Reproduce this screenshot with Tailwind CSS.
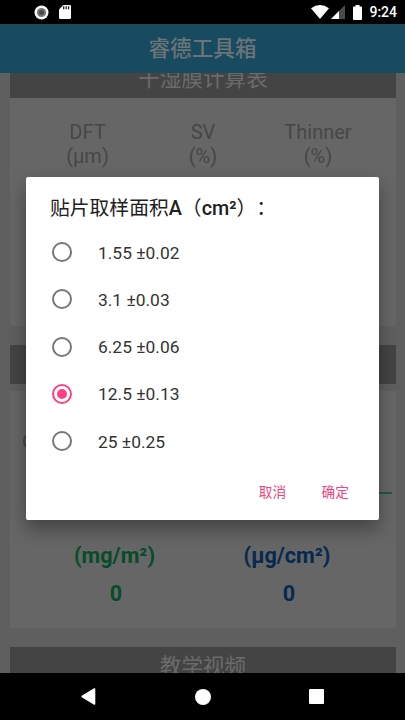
<!DOCTYPE html>
<html lang="zh-CN">
<head>
<meta charset="utf-8">
<meta name="viewport" content="width=device-width, initial-scale=1">
<title>睿德工具箱</title>
<script src="https://cdn.jsdelivr.net/npm/@tailwindcss/browser@4"></script>
</head>
<body class="bg-black">
<div class="relative flex h-[720px] w-[405px] flex-col overflow-hidden bg-black font-[Roboto,'Noto_Sans_CJK_SC',sans-serif]">
  <!-- Status bar -->
  <div class="flex h-6 shrink-0 items-center justify-between pl-[34px] pr-2">
    <div class="flex items-center gap-[10px]">
      <svg class="size-[15px]" viewBox="0 0 15 15"><circle cx="7.5" cy="7.5" r="7" fill="#fff"/><circle cx="7.5" cy="7.5" r="4.6" fill="#777"/><circle cx="7.5" cy="7.5" r="2.5" fill="#4b4b4b"/></svg>
      <svg class="h-[14px] w-3" viewBox="0 0 12 14"><path d="M4.3 0H10.8Q12 0 12 1.2V12.8Q12 14 10.8 14H1.2Q0 14 0 12.8V4.4Z" fill="#fff"/><path d="M4.7 1.3v3M7.2 1.3v3M9.6 1.3v3" stroke="#222" stroke-width="1.3"/></svg>
    </div>
    <div class="flex items-center">
      <svg class="h-[14px] w-[18px]" viewBox="0 0 18 14"><path d="M0 3.2Q9-3 18 3.2L9 14Z" fill="#fff"/></svg>
      <svg class="ml-[2px] h-[14px] w-[14px]" viewBox="0 0 14 14"><path d="M0 14 14 0V14Z" fill="#4a4a4a"/><path d="M0 14 8 6V14Z" fill="#fff"/></svg>
      <svg class="ml-[8px] h-[15px] w-[9px]" viewBox="0 0 9 15"><path d="M2.5 0h4v1.5H8q1 0 1 1V14q0 1-1 1H1q-1 0-1-1V2.5q0-1 1-1h1.5z" fill="#fff"/></svg>
      <span class="ml-[7px] text-[14px] font-medium leading-6 text-white">9:24</span>
    </div>
  </div>
  <!-- App bar -->
  <header class="flex h-[49px] shrink-0 items-center justify-center bg-[#184a60] pt-[2px] text-[21.6px] font-medium text-[#6b7478]">睿德工具箱</header>
  <!-- Dimmed page -->
  <main class="flex h-[600px] shrink-0 flex-col overflow-hidden bg-[#5f5f5f] pl-[10px] pr-[9px]">
    <h2 class="flex h-[25px] shrink-0 items-end justify-center overflow-hidden bg-[#444] pb-[1px] text-[21.6px] leading-[36px] text-[#6b6b6b]"><span>干湿膜计算表</span></h2>
    <section class="grid h-[228px] shrink-0 grid-cols-[155px_76px_1fr] content-start rounded-b-sm bg-[#666] pt-[22px] text-center text-[20px] leading-[24px] text-[#474747]">
      <div>DFT<br>(µm)</div><div>SV<br>(%)</div><div class="pr-[1px]">Thinner<br>(%)</div>
    </section>
    <div class="mt-[19px] h-[39px] shrink-0 bg-[#444]"></div>
    <section class="mt-[7px] h-[237px] shrink-0 bg-[#666]">
      <div class="flex h-[103px] items-end justify-between pl-[13px] pr-[4px]">
        <span class="mb-[43px] size-5 rounded-full border-2 border-[#444]"></span>
        <span class="h-[2px] w-10 bg-[#1d594b]"></span>
      </div>
      <div class="grid grid-cols-[209px_136px] pt-[43px] text-center text-[21.6px] font-bold leading-[38px]">
        <div class="text-[#064c2a]">(mg/m²)<div class="pl-[3px]">0</div></div>
        <div class="text-[#05294f]">(µg/cm²)<div class="pl-[4px]">0</div></div>
      </div>
    </section>
    <h2 class="mt-[19px] h-[39px] shrink-0 bg-[#444] text-center text-[21.6px] leading-[39px] text-[#6b6b6b]">教学视频</h2>
  </main>
  <!-- Navigation bar -->
  <nav class="grid grow grid-cols-[1fr_24px_1fr] items-center justify-items-center bg-black">
    <svg class="ml-[-14px] h-[17px] w-[15px]" viewBox="0 0 15 17"><path d="M13.5 1v15L1.2 8.5Z" fill="#fff" stroke="#fff" stroke-width="1.6" stroke-linejoin="round"/></svg>
    <span class="size-4 rounded-full bg-white"></span>
    <span class="ml-[13px] size-[15px] rounded-[1px] bg-white"></span>
  </nav>
  <!-- Area picker dialog -->
  <div role="dialog" class="absolute left-[26px] top-[176.5px] flex h-[343.5px] w-[353px] flex-col rounded-[2px] bg-white shadow-[0_9px_18px_rgba(0,0,0,0.35)]">
    <h1 class="h-[52px] pl-6 pt-[17px] text-[19.8px] leading-[30px] text-[#212121] [text-spacing-trim:space-all]">贴片取样面积<b class="font-medium">A</b>（<b class="font-medium">cm²</b>）：</h1>
    <ul class="text-[17.4px] text-[#333]">
      <li class="flex h-[47.3px] items-center gap-[26px] pl-[26px]"><span class="size-5 rounded-full border-2 border-[#777]"></span><span class="pt-px">1.55 ±0.02</span></li>
      <li class="flex h-[47.3px] items-center gap-[26px] pl-[26px]"><span class="size-5 rounded-full border-2 border-[#777]"></span><span class="pt-px">3.1 ±0.03</span></li>
      <li class="flex h-[47.3px] items-center gap-[26px] pl-[26px]"><span class="size-5 rounded-full border-2 border-[#777]"></span><span class="pt-px">6.25 ±0.06</span></li>
      <li class="flex h-[47.3px] items-center gap-[26px] pl-[26px]"><span class="flex size-5 items-center justify-center rounded-full border-2 border-[#ff4081]"><i class="size-[10px] rounded-full bg-[#ff4081]"></i></span><span class="pt-px">12.5 ±0.13</span></li>
      <li class="flex h-[47.3px] items-center gap-[26px] pl-[26px]"><span class="size-5 rounded-full border-2 border-[#777]"></span><span class="pt-px">25 ±0.25</span></li>
    </ul>
    <div class="mt-[16px] flex justify-end gap-[35.5px] pr-[30px] text-[13.7px] leading-[22px] text-[#f04482]"><button>取消</button><button>确定</button></div>
  </div>
</div>
</body>
</html>
